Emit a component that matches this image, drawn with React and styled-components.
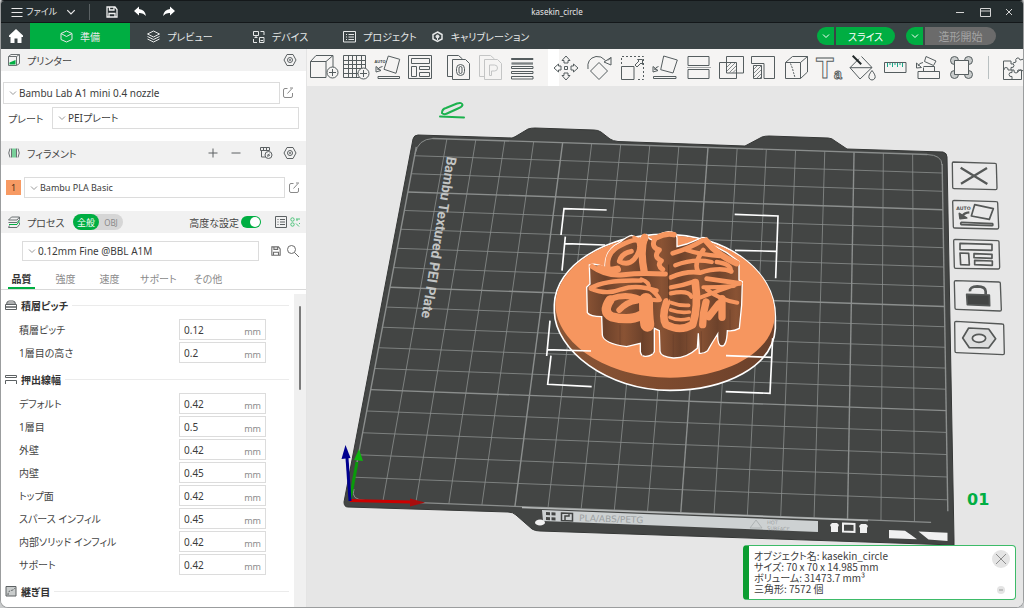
import React, { useId, useState } from "react";
import styled, { createGlobalStyle } from "styled-components";

const GlobalStyle = createGlobalStyle`
  * {
    box-sizing: border-box;
  }
  body {
    margin: 0;
    background-color: #c9cbcc;
  }
  body, button, input, select {
    font-family: "Noto Sans", "Noto Sans CJK JP", sans-serif;
    font-size: 10px;
    font-feature-settings: "palt";
    white-space: nowrap;
  }
  button {
    padding: 0;
    border: 0;
    background: none;
    color: inherit;
    display: flex;
    align-items: center;
    justify-content: center;
  }
`;

const green = "#00ae42";

const Window = styled.div`
  display: flex;
  flex-direction: column;
  height: 100vh;
  overflow: hidden;
  border: 1px solid #9b9d9e;
  border-top-color: #14181a;
  border-radius: 4px 4px 8px 8px;
  background-color: #fff;
  color: #444;
`;

/* title bar */

const TitleBar = styled.header`
  display: flex;
  align-items: center;
  flex: 0 0 22px;
  background-color: #262e30;
  border-bottom: 1px solid #14181a;
  color: #e8e8e8;
`;

const TitleGroup = styled.div`
  display: flex;
  align-items: center;
  width: ${(props) => props.$width}px;
  padding-left: ${(props) => props.$pad || 0}px;
`;

const TitleButton = styled.button`
  width: ${(props) => props.$width}px;
  height: 21px;
  gap: 3px;
  font-size: 9px;
`;

const FileButton = styled(TitleButton)`
  justify-content: flex-start;
  padding-left: 2px;
`;

const TitleDivider = styled.span`
  width: 1px;
  height: 16px;
  margin: 0 10px 0 6px;
  background-color: #5a6163;
`;

const Title = styled.h1`
  flex: 1;
  margin: 0;
  text-align: center;
  font-size: 8px;
  font-weight: 400;
`;

/* menu bar */

const MenuBar = styled.nav`
  display: flex;
  align-items: stretch;
  flex: 0 0 26px;
  background-color: #3b4446;
  color: #e6e8e8;
`;

const HomeButton = styled.button`
  width: 29px;
`;

const MenuTab = styled.button`
  width: 100px;
  gap: 7px;
  background-color: ${(props) => (props.$active ? green : "transparent")};
`;

const MenuActions = styled.div`
  display: flex;
  align-items: center;
  gap: 11px;
  margin-left: auto;
  padding-right: 27px;
`;

const SplitButton = styled.div`
  display: flex;
  gap: 2px;
  height: 18px;
`;

const SplitArrow = styled.button`
  width: 17px;
  border-radius: 9px 0 0 9px;
  background-color: ${green};
`;

const SplitMain = styled.button`
  width: ${(props) => props.$width}px;
  border-radius: 0 9px 9px 0;
  background-color: ${(props) => (props.disabled ? "#6b6b6b" : green)};
  color: ${(props) => (props.disabled ? "#a3a3a3" : "#fff")};
  font-size: ${(props) => (props.disabled ? 11 : 10)}px;
`;

/* sidebar */

const Main = styled.main`
  display: flex;
  flex: 1;
  min-height: 0;
`;

const Sidebar = styled.aside`
  display: flex;
  flex-direction: column;
  flex: 0 0 306px;
  min-height: 0;
  background-color: #fff;
  border-right: 1px solid #e4e4e4;
`;

const PanelHeader = styled.div`
  display: flex;
  align-items: center;
  flex: 0 0 ${(props) => props.$height}px;
  margin-top: ${(props) => props.$top || 0}px;
  padding: 0 ${(props) => props.$right || 9}px 0 6px;
  background-color: #f1f1f1;
`;

const PanelTitle = styled.h2`
  flex: ${(props) => (props.$width ? `0 0 ${props.$width}px` : "1")};
  margin: 0 0 0 6px;
  font-size: 10px;
  font-weight: 400;
`;

const HeaderButton = styled.button`
  width: 14px;
  height: 14px;
  margin-left: ${(props) => props.$gap || 0}px;
`;

const Row = styled.div`
  display: flex;
  align-items: center;
  flex: none;
  margin-top: ${(props) => props.$top}px;
  padding: 0 ${(props) => props.$right}px 0 ${(props) => props.$left}px;
`;

const RowLabel = styled.label`
  width: 44px;
`;

const SelectBox = styled.div`
  display: flex;
  align-items: center;
  flex: 1;
  height: ${(props) => props.$height || 22}px;
  padding-left: 5px;
  border: 1px solid #dcdcdc;
  background-color: #fff;
`;

const PlainSelect = styled.select`
  flex: 1;
  min-width: 0;
  padding: 0;
  margin-left: 2px;
  border: 0;
  outline: 0;
  appearance: none;
  background: none;
  color: #3c3c3c;
  font-size: ${(props) => (props.$small ? 9 : 10)}px;
`;

const RowButton = styled.button`
  width: 14px;
  height: 14px;
  margin-left: ${(props) => props.$gap}px;
`;

const Swatch = styled.button`
  width: 15px;
  height: 15px;
  margin-right: 3px;
  background-color: #f79a63;
  color: #4f2c15;
  font-size: 9px;
`;

const Segment = styled.div`
  display: flex;
  height: 16px;
  margin-right: auto;
  border-radius: 8px;
  background-color: #d6d6d6;
`;

const SegmentButton = styled.button`
  width: ${(props) => (props.$active ? 26 : 24)}px;
  border-radius: 8px;
  background-color: ${(props) => (props.$active ? green : "transparent")};
  color: ${(props) => (props.$active ? "#fff" : "#8a8a8a")};
  font-size: ${(props) => (props.$active ? 9 : 8)}px;
`;

const Toggle = styled.input`
  flex: none;
  appearance: none;
  width: 20px;
  height: 12px;
  margin: 0 0 0 2px;
  padding: 1px;
  border-radius: 6px;
  background-color: #bbb;

  &::before {
    content: "";
    display: block;
    width: 10px;
    height: 10px;
    border-radius: 50%;
    background-color: #fff;
  }
  &:checked {
    background-color: ${green};
  }
  &:checked::before {
    margin-left: auto;
  }
`;

const TabList = styled.div`
  display: flex;
  flex: none;
  height: 21px;
  margin-top: 8px;
  padding-left: 7px;
  gap: 17px;
  border-bottom: 1px solid #d9d9d9;
`;

const Tab = styled.button`
  min-width: 27px;
  border-bottom: 2px solid ${(props) => (props.$active ? green : "transparent")};
  color: ${(props) => (props.$active ? "#333" : "#8a8a8a")};
  font-weight: ${(props) => (props.$active ? 700 : 400)};
`;

const Settings = styled.div`
  display: flex;
  flex: 1;
  min-height: 0;
`;

const SettingsList = styled.div`
  flex: 1;
  overflow: hidden;
`;

const ScrollTrack = styled.div`
  flex: 0 0 11px;
  margin-top: 4px;
  padding: 12px 5px;
  background-color: #f0f0f0;
`;

const ScrollThumb = styled.div`
  width: 2px;
  height: 84px;
  border-radius: 1px;
  background-color: #7b7b7b;
`;

const GroupTitle = styled.h3`
  display: flex;
  align-items: center;
  gap: 4px;
  height: 20px;
  margin: 5px 5px 3px 4px;
  color: #333;
  font-size: 10px;
  font-weight: 700;

  &::after {
    content: "";
    flex: 1;
    height: 1px;
    background-color: #ebebeb;
  }
`;

const Setting = styled.div`
  display: flex;
  align-items: center;
  justify-content: space-between;
  height: 23px;
  padding: 0 28px 0 18px;
`;

const UnitBox = styled.div`
  display: flex;
  align-items: center;
  width: 87px;
  height: 21px;
  padding: 0 4px;
  border: 1px solid #dcdcdc;
  background-color: #fff;
`;

const UnitInput = styled.input`
  flex: 1;
  min-width: 0;
  padding: 0;
  border: 0;
  outline: 0;
  color: #3c3c3c;
  font-size: 10px;
`;

const Unit = styled.span`
  padding-top: 3px;
  color: #8c8c8c;
  font-size: 9px;
`;

/* 3d viewport */

const Viewport = styled.section`
  position: relative;
  display: flex;
  flex-direction: column;
  flex: 1;
  min-width: 0;
  background-color: #e6e6e6;
`;

const Toolbar = styled.div`
  display: flex;
  align-items: center;
  flex: 0 0 37px;
  overflow: hidden;
  background-color: #f5f4f3;
`;

const ToolGroup = styled.div`
  display: flex;
  flex: ${(props) => props.$flex || "none"};
  padding: 0 ${(props) => props.$right || 0}px 0 ${(props) => props.$left || 0}px;
`;

const Tool = styled.button`
  flex: ${(props) => (props.$grow ? "1 1 0" : `0 0 ${props.$width || 32}px`)};
  justify-content: ${(props) => (props.$width ? "flex-start" : "center")};
  min-width: 0;
  height: 28px;
  opacity: ${(props) => (props.disabled ? 0.3 : 1)};

  svg {
    flex: none;
  }
`;

const ToolGap = styled.div`
  width: 11px;
  align-self: stretch;
  margin-right: -9px;
  background-color: #fff;
`;

const ToolDivider = styled.div`
  width: 1px;
  height: 23px;
  background-color: #b9c0c1;
`;

const Scene = styled.svg`
  display: block;
  flex: 1;
  width: 100%;
  min-height: 0;
`;

const Notice = styled.div`
  position: absolute;
  right: 7px;
  bottom: 7px;
  display: flex;
  width: 273px;
  height: 55px;
  padding: 4px 5px 5px 5px;
  border: 1px solid #3dbb68;
  border-left: 6px solid #0b9d31;
  border-radius: 4px;
  background-color: #fff;
  color: #3c3c3c;
`;

const NoticeText = styled.p`
  flex: 1;
  margin: 0;
  font-family: "Noto Sans CJK JP", sans-serif;
  font-size: 10px;
  line-height: 11px;
`;

const NoticeButtons = styled.div`
  display: flex;
  flex-direction: column;
  align-items: center;
  justify-content: space-between;
`;

const RoundButton = styled.button`
  width: ${(props) => props.$size}px;
  height: ${(props) => props.$size}px;
  border-radius: 50%;
  background-color: #e4e4e4;
`;

/* icons */

const Icon = ({ size = 14, w, h, vw, vh, color = "#5c6163", stroke = 1, children }) => (
  <svg
    width={w || size}
    height={h || size}
    viewBox={`0 0 ${vw || w || size} ${vh || h || size}`}
    fill="none"
    stroke={color}
    strokeWidth={stroke}
    aria-hidden="true"
  >
    {children}
  </svg>
);

const Chevron = ({ color = "#9a9a9a", size = 8 }) => (
  <Icon size={size} vw={8} vh={8} color={color}>
    <path d="M1 2.500 4 5.500 7 2.500" />
  </Icon>
);

const GearNut = () => (
  <Icon>
    <path d="M4 1.500h6L13 7l-3 5.500H4L1 7z" strokeLinejoin="round" />
    <circle cx="7" cy="7" r="2.500" />
    <circle cx="7" cy="7" r="0.600" />
  </Icon>
);

const EditIcon = () => (
  <Icon color="#8a8a8a">
    <path d="M6.500 2.500H4a1.500 1.500 0 0 0-1.500 1.500v6A1.500 1.500 0 0 0 4 11.500h6a1.500 1.500 0 0 0 1.500-1.500V7M6.500 7.500 11 2.500M9 2h3" />
  </Icon>
);

const SaveIcon = ({ color = "#6b6b6b", size = 12 }) => (
  <Icon size={size} vw={12} vh={12} color={color} stroke={1.3}>
    <path d="M1 1h8l2 2.500V11H1zM3.500 1v3H8V1M3 11V7.500h6V11" />
  </Icon>
);

const PrinterIcon = () => (
  <Icon color="#6a7072">
    <path d="M1.500 3.500h8v9h-8zM1.500 3.500 4 1.500h8.500v9l-3 2M9.500 3.500l3-2" />
    <path d="M2.500 11.500V9.500L8.500 7v4.500z" fill={green} stroke="none" />
  </Icon>
);

const FilamentIcon = () => (
  <Icon color="#6a7072">
    <path d="M3 2.500Q.5 7 3 11.500M11 2.500Q13.500 7 11 11.500" />
    <path d="M4.500 2.500v9M9.500 2.500v9" />
    <path d="M6 2.500v9M8 2.500v9" stroke={green} />
  </Icon>
);

const ProcessIcon = () => (
  <Icon color="#6a7072">
    <path d="M4.500 2h8l-2.500 3H1.500zM12.500 2v2.500L10 7.500H1.500" />
    <path d="M12.500 7.500v2L10 12.500H1.500l1-2" />
    <path d="M12.500 5.500 10 9.500H2" stroke={green} />
  </Icon>
);

/* icons of the viewport toolbar, all on a 32 x 28 canvas */

const ToolIcon = ({ children }) => (
  <Icon w={32} h={28} color="#555d5f">
    {children}
  </Icon>
);

const PlusBadge = ({ x, y }) => (
  <>
    <circle cx={x} cy={y} r="5.500" fill="#f5f4f3" />
    <path d={`M${x - 3.5} ${y}h7M${x} ${y - 3.5}v7`} />
  </>
);

const toolIcons = {
  addCube: (
    <ToolIcon>
      <path d="M2.500 7.500H18v16H2.500zM2.500 7.500 8 1.500h17l-7 6M25 1.500v13" />
      <PlusBadge x={24.5} y={18.5} />
    </ToolIcon>
  ),
  addPlate: (
    <ToolIcon>
      <path d="M3.500 1.500h22v22h-22zM8.500 1.500v22M12.500 1.500v22M16.500 1.500v22M21.500 1.500v22M3.500 6.500h22M3.500 10.500h22M3.500 14.500h22M3.500 19.500h22" />
      <PlusBadge x={23.5} y={19.5} />
    </ToolIcon>
  ),
  auto: (
    <ToolIcon>
      <path d="M16.300 2 27.700 5.300 24 19.300 12 15.300zM6 22.500h21.500v2H6z" />
      <path d="M10.500 12.500Q6.500 13 5.500 16M4 12.500v5.500l5-1.500zM5.500 14.500l3 2" />
      <text x="2.500" y="9" fontSize="4" fontWeight="700" fill="#434b4d" stroke="none">AUTO</text>
    </ToolIcon>
  ),
  arrange: (
    <ToolIcon>
      <path d="M4.500 1.500h23v23h-23zM7.500 4.500h18v5h-18zM7.500 12.500h5v10h-5zM15.500 12.500h10v3h-10zM15.500 18.500h10v4h-10z" />
    </ToolIcon>
  ),
  pageO: (
    <ToolIcon>
      <path d="M10 22.500H5.500v-21h11l4 3.500M10.500 5.500h13l4 4v16h-17z" />
      <rect x="14.500" y="10.500" width="8" height="11" rx="4" />
      <rect x="17" y="12.500" width="3" height="7" rx="1.500" />
    </ToolIcon>
  ),
  pageP: (
    <ToolIcon>
      <path d="M10 22.500H5.500v-21h11l4 3.500M10.500 5.500h13l4 4v16h-17z" />
      <path d="M15.500 21.500v-10.500h5q3 0 3 3t-3 3h-3v4.500z" />
    </ToolIcon>
  ),
  layers: (
    <ToolIcon>
      <path d="M5.500 5H27M5.500 9H27M5.500 10H27" />
      <path d="M5.500 4.500H27v1H5.500zM5.500 12.500H27v2H5.500zM5.500 17.500H27v2H5.500zM5.500 22.500H27v2.500H5.500z" />
    </ToolIcon>
  ),
  move: (
    <ToolIcon>
      <path d="m16 2 4 4.500h-2V9h-4V6.500h-2zM16 26l4-4.500h-2V19h-4v2.500h-2zM4 14l4.500-4v2H11v4H8.500v2zM28 14l-4.500-4v2H21v4h2.500v2z" />
      <path d="M14.500 12.500h3v3h-3z" />
    </ToolIcon>
  ),
  rotate: (
    <ToolIcon>
      <path d="m16 8.500 8.500 8.500-8.500 8.500L7.500 17z" />
      <path d="M5 15Q3.500 4.500 13 2.500q5-1 9.500 4M28 3.500v7.500l-7-3zM28 3.500l-3 3" />
    </ToolIcon>
  ),
  scale: (
    <ToolIcon>
      <path d="M5.500 12.500H18v13H5.500z" />
      <path d="M5.500 10V2.500h22v23H20" strokeDasharray="2 2" />
      <path d="m19 11 4-4-1.500-1.500h5v5L25 9l-4 4z" />
    </ToolIcon>
  ),
  lay: (
    <ToolIcon>
      <path d="M14.700 2 28.300 6 24 19 11.700 15.700zM4.500 22.500h22.500v2H4.500z" />
      <path d="M9.500 12.500Q6.500 13 5.500 16M4 12.500v5.500l5-1.500zM5.500 14.500l3 2" />
    </ToolIcon>
  ),
  cut: (
    <ToolIcon>
      <path d="M6 2.500h21v9H6zM6 15.500h21v9H6z" />
      <path d="M5.500 13.500h23" strokeDasharray="1 1" />
    </ToolIcon>
  ),
  boolean: (
    <ToolIcon>
      <path d="M4.500 8.500h17v16h-17zM11.500 2.500h17v16.500h-17z" />
      <path d="m12 13 4.500-4.500M12 17l8.500-8.500M14.500 18.500l7-7M18 18.500l3-3" strokeWidth="0.700" />
    </ToolIcon>
  ),
  support: (
    <ToolIcon>
      <path d="M4.500 2.500h23v22H17v-15H4.500zM6.500 11.500h8v13h-8z" />
      <path d="m6.500 15.500 4-4M6.500 19.500l8-8M6.500 23.500l8-8M9.500 24.500l5-5M12.500 24.500l2-2" strokeWidth="0.700" />
    </ToolIcon>
  ),
  seam: (
    <ToolIcon>
      <path d="M5.500 8.500h15v16h-15zM5.500 8.500l7-6h15l-7 6M27.500 2.500v15.500l-7 6.500" />
      <path d="m10.500 9.500 2 5 1 4 1.500 5" strokeDasharray="2 1" />
    </ToolIcon>
  ),
  text: (
    <ToolIcon>
      <text x="3" y="24" fontSize="29" fontFamily="Liberation Sans" fontWeight="700" strokeWidth="0.900">T</text>
      <text x="21" y="25" fontSize="14" fontFamily="Liberation Sans" fontWeight="700" strokeWidth="0.900">a</text>
    </ToolIcon>
  ),
  paint: (
    <ToolIcon>
      <path d="m15.500 2.500 10.500 11-12 11.500L4 13.700l9-9M4 13.700h22" />
      <path d="m6.700 1.700 8.500 8.500" strokeWidth="2" stroke="#222829" />
      <path d="M26 16.500q4 5 3 7.500-1 2-3 2t-3-2q-1-2.500 3-7.500z" fill="#f5f4f3" />
    </ToolIcon>
  ),
  measure: (
    <ToolIcon>
      <path d="M5.500 8.500H27v10H5.500z" />
      <path d="M8.500 9v4M11 9v2M13.500 9v4M16 9v2M18.500 9v4M21 9v2M23.500 9v4" stroke="#1aa88a" />
    </ToolIcon>
  ),
  assembly: (
    <ToolIcon>
      <path d="M6 17.500h21.500v7H6zM11.500 13.500V17M22.500 12.500V17M11.500 12.500h11" />
      <path d="m14 2.500 10 4.500-2.500 4.500-9-4zM11 8.500Q7 9 6 12M4.500 9v5l5-.5z" />
    </ToolIcon>
  ),
  frame: (
    <ToolIcon>
      <path d="M9.500 6.500h14v14h-14z" />
      <g fill="#c9cccc">
        <path d="M9.500 10.500a4 4 0 1 1 4-4h-4zM23.500 10.500a4 4 0 1 0-4-4h4zM9.500 16.500a4 4 0 1 0 4 4h-4zM23.500 16.500a4 4 0 1 1-4 4h4z" />
      </g>
    </ToolIcon>
  ),
  puzzle: (
    <ToolIcon>
      <path d="M7.500 7h7.500v3q3-1 3 1.500T15 13.500V16h-3q.5-2.500-2-2.500T8 16h-.5zM7.500 16v9.500H16v-3q-3 .5-3-2t3-2V16h-1M16 25.500h9.500V16H22q.5 3-2 3t-2-3h-2" />
      <path d="m17 9 3-1q-1-3 1-4t3 2l4-1 1 4q3-1 3.500 1.500T29 13l-1 4-4-1q-1 2-3 1" />
    </ToolIcon>
  ),
};

/* scene */

const plateCorners = { tl: [418, 138], tr: [942, 155], br: [948, 523], bl: [350, 500] };

// perspective mapping of the unit square onto the plate
const makeProjection = ({ tl, tr, br, bl }) => {
  const dx1 = tr[0] - br[0];
  const dx2 = bl[0] - br[0];
  const dx3 = tl[0] - tr[0] + br[0] - bl[0];
  const dy1 = tr[1] - br[1];
  const dy2 = bl[1] - br[1];
  const dy3 = tl[1] - tr[1] + br[1] - bl[1];
  const det = dx1 * dy2 - dx2 * dy1;
  const g = (dx3 * dy2 - dx2 * dy3) / det;
  const h = (dx1 * dy3 - dx3 * dy1) / det;
  return (u, v) => {
    const w = g * u + h * v + 1;
    const x = (tr[0] - tl[0] + g * tr[0]) * u + (bl[0] - tl[0] + h * bl[0]) * v + tl[0];
    const y = (tr[1] - tl[1] + g * tr[1]) * u + (bl[1] - tl[1] + h * bl[1]) * v + tl[1];
    return [x / w, y / w];
  };
};

const project = makeProjection(plateCorners);
const CELLS = 18;

const gridLines = [];
for (let i = 0; i <= CELLS; i++) {
  const t = i / CELLS;
  const edge = i === 0 || i === CELLS;
  const near = edge ? 0.028 : 0;
  gridLines.push({ from: project(t, near), to: project(t, 1 - near), bold: i % 5 === 0 || edge });
  gridLines.push({ from: project(near, t), to: project(1 - near, t), bold: (CELLS - i) % 5 === 0 || edge });
}

const PlateGrid = () => (
  <g stroke="#8b8e8d" fill="none">
    {gridLines.map(({ from, to, bold }, i) => (
      <line
        key={i}
        x1={from[0]}
        y1={from[1]}
        x2={to[0]}
        y2={to[1]}
        strokeWidth={bold ? 1.4 : 1}
        opacity={bold ? 1 : 0.8}
      />
    ))}
    <path d="M415 154Q418 139 433 138.500M927 154.500Q942 155 942 165M354 489Q350 500 366 500.600" />
  </g>
);

const Plate = () => (
  <g>
    <path
      d="M418 135 512 138Q515 137 518 135L528 129Q531 128 535 128L594 130Q598 130 601 132L610 139Q613 141 618 141.500L745 146 762 137Q765 136 769 136L828 138Q832 138 835 141L847 149 943 152Q947 153 947 157L954 540V545L540 531Q535 531 532 529L516 515Q513 512 508 512L348 507Q344 507 344 502L413 139Q414 135 418 135z"
      fill="#434544"
      stroke="#363837"
    />
    <PlateGrid />
    <text
      transform="translate(447 156) rotate(99)"
      fill="#c2c4c3"
      fontFamily="Roboto"
      fontSize="14"
      fontWeight="700"
    >
      Bambu Textured PEI Plate
    </text>
    <path d="M522 507.500 868 520.500" stroke="#b6b9b9" strokeWidth="1.500" />
    <path d="M542 510 818 521V532L543 521z" fill="#cdd1d2" />
    <ellipse cx="540" cy="522.500" rx="5" ry="3" fill="#f2f2f2" />
    <path d="m546 512 4 .2v3l-4-.2zM551.500 512.200l4 .2v3l-4-.2zM546 517l4 .2v3l-4-.2zM551.500 517.200l4 .2v3l-4-.2z" fill="#434544" />
    <path d="m561.500 513 11 .4v7.500l-11-.4zM565 520v-4h4v-2.500" stroke="#434544" fill="none" strokeWidth="1.500" />
    <g fill="#9da2a3" fontFamily="DejaVu Sans">
      <text transform="translate(579 521) rotate(2)" fontSize="9">PLA/ABS/PETG</text>
      <text transform="translate(767 524) rotate(2)" fontSize="5">HOT</text>
      <text transform="translate(767 530) rotate(2)" fontSize="5">SURFACE</text>
    </g>
    <path d="m756 520 6 8h-12z" fill="none" stroke="#aeb3b4" />
    <g fill="#f0f0f0">
      <path d="M889 530l16 .7q6 4 12 8.600l-28-1zM918.500 531.500l29 1.200V541l-19-1.500q-5-4-10-8z" />
      <path d="M830 525l2-2h5l2 2-1 2v5h-7v-5zM859 526l2-2h5l2 2-1 2v5h-7v-5z" />
    </g>
    <path d="M843 523.500l11.500.4v8l-11.500-.4z" fill="none" stroke="#f0f0f0" strokeWidth="2" />
  </g>
);

const letterShape =
  "M148 195Q170 188 195 203Q192 150 240 127Q262 108 275 106L300 116 318 103 328 116 340 122Q350 100 385 95Q411 95 411 115V140L440 132 488 112 500 114 512 132 560 158 597 185V240L607 245 605 315 598 385Q580 395 562 392Q560 440 545 438Q532 436 533 402Q515 430 503 452Q490 462 478 460L475 400 472 445Q440 475 400 474Q362 470 360 455L358 392 343 385V455Q335 470 315 469Q303 468 301 455V430L260 440Q190 430 187 405L185 350Q150 350 142 338L140 262 150 252z";

const Model = () => (
  <g transform="translate(540 200) scale(.33333)">
    <defs>
      <linearGradient id="rim" x1="0" x2="1">
        <stop offset="0" stopColor="#8a5636" />
        <stop offset="0.500" stopColor="#7d4a2e" />
        <stop offset="1" stopColor="#6a402b" />
      </linearGradient>
      <linearGradient id="wall" x1="0" x2="0.120" spreadMethod="reflect">
        <stop offset="0" stopColor="#8a5334" />
        <stop offset="1" stopColor="#6d422b" />
      </linearGradient>
    </defs>
    <path
      d="M43 315C46 195 200 103 375 103S706 205 706 350V385C700 500 555 571 390 571C200 571 46 450 43 335z"
      fill="url(#rim)"
      stroke="#fff"
      strokeWidth="5"
    />
    <path d="M46 315C50 195 200 106 375 106S704 205 704 345C704 455 560 533 390 533C200 533 50 430 46 315z" fill="#f6965f" />
    <path d={letterShape} fill="url(#wall)" stroke="#fff" strokeWidth="4" />
    <g fill="none" stroke="#f6965f" strokeLinecap="round" strokeLinejoin="round">
      {/* upper left */}
      <path d="M156 199Q200 230 250 224T376 222" strokeWidth="15" />
      <path d="M180 206Q204 216 232 208" strokeWidth="22" />
      <path d="M204 200Q198 158 242 136T296 124Q306 150 282 178Q264 198 238 184Q244 160 274 154" strokeWidth="15" />
      <path d="M314 112Q300 150 312 212" strokeWidth="22" />
      <path d="M282 112Q300 125 320 118" strokeWidth="10" />
      <path d="M348 114Q376 98 402 104" strokeWidth="16" />
      <path d="M344 118Q332 142 358 150Q338 170 364 182Q350 196 368 208" strokeWidth="15" />
      {/* upper right */}
      <path d="M488 121Q450 145 398 160" strokeWidth="14" />
      <path d="M498 122Q530 164 590 190" strokeWidth="19" />
      <path d="M440 150Q480 164 540 168M406 196Q460 174 515 186" strokeWidth="13" />
      <path d="M490 150Q460 190 474 214M392 232Q440 212 480 218Q540 200 574 214M500 236 600 250" strokeWidth="14" />
      <path d="M530 186Q576 192 572 214" strokeWidth="13" />
      {/* lower left */}
      <path d="M152 266Q200 286 244 268Q290 252 350 272M152 264Q200 238 304 242" strokeWidth="13" />
      <path d="M304 238Q330 246 326 264Q352 282 360 300Q334 304 312 290" strokeWidth="12" />
      <path d="M210 300Q186 336 214 350Q270 364 302 346" strokeWidth="28" />
      <path d="M214 296Q270 276 318 308M238 330Q262 304 290 302" strokeWidth="18" />
      <path d="M318 300Q318 350 322 374" strokeWidth="42" />
      {/* lower right */}
      <path d="M392 262Q430 256 464 244M392 280Q446 270 454 290" strokeWidth="13" />
      <path d="M380 306Q364 352 378 374Q420 396 458 374Q476 318 466 248" strokeWidth="23" />
      <path d="M394 308Q420 318 446 316M392 330Q420 340 448 336M390 352Q416 364 446 356" strokeWidth="11" />
      <path d="M490 262Q540 262 582 258M482 292Q540 270 598 250M500 268Q540 300 592 308" strokeWidth="12" />
      <path d="M498 306Q488 340 488 374M506 350 536 312M546 296V352" strokeWidth="22" />
    </g>
    <g fill="none" stroke="#6a402b" strokeWidth="3" strokeLinecap="round">
      <path d="M308 400V466M338 398V460M240 376V434M400 404V470M440 400V462M484 395V456M570 330V388" opacity=".6" />
      <path d="M386 195V300" strokeWidth="2" stroke="#4f3020" />
    </g>
    <g fill="none" stroke="#fff" strokeWidth="5">
      <path d="M200 30 72 26 63 105M76 110 66 212M76 131 195 135M584 43 714 48 707 235M585 151 708 154" />
      <path d="M30 362 20 468M20 449 153 453M33 467 23 553 155 560M558 467 695 472M698 415 690 580 557 575" />
    </g>
  </g>
);

const PlateButtons = () => (
  <g transform="translate(930 150) scale(.33333)" fill="none" stroke="#555857" strokeWidth="5" strokeLinejoin="round">
    <g fill="#e9e9e9" strokeWidth="4">
      <path d="M70 36 196 40Q199 40 199 44L201 114Q201 119 197 119L72 116Q68 116 68 112L67 40Q67 36 70 36z" />
      <path d="M72 151 199 155Q203 155 203 159L206 232Q206 237 202 237L74 234Q70 234 70 230L68 155Q68 151 72 151z" />
      <path d="M75 268 203 272Q207 272 207 276L209 352Q209 357 205 357L77 355Q73 355 73 351L71 272Q71 268 75 268z" />
      <path d="M77 392 207 396Q211 396 211 400L214 479Q214 483 210 483L79 478Q75 478 75 474L73 396Q73 392 77 392z" />
      <path d="M78 514 217 522Q221 522 221 526L223 610Q223 614 219 614L79 608Q75 608 75 604L74 518Q74 514 78 514z" />
    </g>
    <path d="M92 53 172 102M171 54 93 101" strokeWidth="7" />
    <path d="M134 164 190 176 178 208 124 198zM94 217 188 221Q190 227 186 227L94 224Q90 220 94 217z" />
    <path d="M118 187Q102 188 98 198" strokeWidth="7" />
    <path d="M88 190 90 206 110 204z" fill="#555857" />
    <text x="79" y="180" fontSize="14" fontWeight="700" fontFamily="DejaVu Sans" fill="#555857" stroke="none">AUTO</text>
    <path d="M90 280 186 283V301L90 299zM90 309 116 310 118 345 92 344zM132 311 186 313V325L132 323zM134 331 187 333V346L134 344z" />
    <path d="M110 433 178 435 179 467 112 464z" fill="#434544" />
    <path d="M120 424Q118 410 142 409 166 409 167 424V434" strokeWidth="8" />
    <path d="M116 534 176 537 197 566 176 594 118 593 98 564z" fill="#dcdddd" />
    <ellipse cx="147" cy="565" rx="20" ry="12" fill="#e9e9e9" />
  </g>
);

const Axes = () => (
  <g strokeWidth="3">
    <path d="M350 500 357 462" stroke="#0a9a0a" />
    <path d="m359 449 4 12-9-1z" fill="#0fb30f" />
    <path d="m350 500.500 60 1.500" stroke="#c00" />
    <path d="m425 502.500-15 4v-8z" fill="#a80d0d" />
    <path d="M350 501 347 458" stroke="#00008f" />
    <path d="m345.500 445 5 13-9 1z" fill="#00008f" />
  </g>
);

const PlateScene = () => (
  <Scene viewBox="307 86 716 521" preserveAspectRatio="xMidYMid slice" role="img" aria-label="kasekin_circle">
    <rect x="307" y="86" width="716" height="521" fill="#e6e6e6" />
    <Plate />
    <Model />
    <PlateButtons />
    <Axes />
    <g fill="none" stroke="#1cb24e" strokeWidth="2" strokeLinecap="round">
      <path d="M442 113Q442 109 446 108L457 103.500Q462 102 462.500 105 462 107 458 108.500L447 113.500Q444 115 442 113z" />
      <path d="m440 116.500 24 1" />
    </g>
    <text x="967" y="505" fill={green} fontFamily="DejaVu Sans" fontSize="16" fontWeight="700">01</text>
  </Scene>
);

/* page parts */

const menuTabs = [
  {
    label: "準備",
    icon: <path d="M6.500 1 12 3.500v6L6.500 12 1 9.500v-6zM1 3.500 6.500 6.500 12 3.500" />,
  },
  {
    label: "プレビュー",
    icon: <path d="M6.500 1 12.500 4l-6 3-6-3zM.5 6.500l6 3 6-3M.5 9l6 3 6-3" />,
  },
  {
    label: "デバイス",
    icon: <path d="M1.500 1.500h5v4h-5zM4 5.500V7M2.500 7.500h3M8.500 1.500H12V5M1.500 9v3.500H5M7.500 7.500H12v5H7.500zM8.500 10.500h2.500" />,
  },
  {
    label: "プロジェクト",
    icon: <path d="M.5 1.500h12v10.500H.5zM3 4.500h1M5.500 4.500H11M3 7h1M5.500 7H11M3 9.500h1M5.500 9.500H11" />,
  },
  {
    label: "キャリブレーション",
    icon: (
      <>
        <path d="M6.500 2 11 4.500v4.500l-4.500 2.500L2 9V4.500z" strokeWidth="1.500" />
        <circle cx="6.500" cy="6.500" r="1.500" fill="#e6e8e8" />
        <path d="M6.500 8v2" />
      </>
    ),
  },
];

const mainTools = [
  ["addCube", "追加"],
  ["addPlate", "プレートを追加"],
  ["auto", "自動回転"],
  ["arrange", "整列"],
];

const editTools = [
  "move", "rotate", "scale", "lay", "cut", "boolean", "support",
  "seam", "text", "paint", "measure", "assembly", "frame",
];

const groups = [
  {
    title: "積層ピッチ",
    icon: <path d="M1.500 5.500Q1.500 2 4 2h4q2.500 0 2.500 3.500zM.5 5.500h11V8H.5zM.5 8h11v2.500H.5zM2 4h8" />,
    items: [
      ["積層ピッチ", "0.12"],
      ["1層目の高さ", "0.2"],
    ],
  },
  {
    title: "押出線幅",
    icon: <path d="M.5 2.500h11v2H.5zM.5 11V7.500h11V11" />,
    items: [
      ["デフォルト", "0.42"],
      ["1層目", "0.5"],
      ["外壁", "0.42"],
      ["内壁", "0.45"],
      ["トップ面", "0.42"],
      ["スパース インフィル", "0.45"],
      ["内部ソリッド インフィル", "0.42"],
      ["サポート", "0.42"],
    ],
  },
  {
    title: "継ぎ目",
    icon: (
      <>
        <path d="M1 1.500h10v9.500H1z" fill="#c9cccc" />
        <path d="M3 10q0-4 3-4.500T10 3" strokeDasharray="2 1" />
      </>
    ),
    items: [],
  },
];

const NumberSetting = ({ label, value }) => {
  const id = useId();
  return (
    <Setting>
      <label htmlFor={id}>{label}</label>
      <UnitBox>
        <UnitInput id={id} defaultValue={value} />
        <Unit>mm</Unit>
      </UnitBox>
    </Setting>
  );
};

const Dropdown = ({ id, label, value, height, small }) => (
  <SelectBox $height={height}>
    <Chevron />
    <PlainSelect id={id} aria-label={label} $small={small}>
      <option>{value}</option>
    </PlainSelect>
  </SelectBox>
);

const SettingsSidebar = () => {
  const [tab, setTab] = useState("品質");

  return (
    <Sidebar>
      <PanelHeader $height={22}>
        <PrinterIcon />
        <PanelTitle>プリンター</PanelTitle>
        <HeaderButton aria-label="プリンター設定"><GearNut /></HeaderButton>
      </PanelHeader>
      <Row $top={11} $left={2} $right={11}>
        <Dropdown label="プリンター" value="Bambu Lab A1 mini 0.4 nozzle" />
        <RowButton $gap={1} aria-label="編集"><EditIcon /></RowButton>
      </Row>
      <Row $top={3} $left={7} $right={7}>
        <RowLabel htmlFor="plate">プレート</RowLabel>
        <Dropdown id="plate" value="PEIプレート" />
      </Row>

      <PanelHeader $height={24} $top={12}>
        <FilamentIcon />
        <PanelTitle>フィラメント</PanelTitle>
        <HeaderButton aria-label="追加">
          <Icon><path d="M2.500 7h9M7 2.500v9" /></Icon>
        </HeaderButton>
        <HeaderButton $gap={9} aria-label="削除">
          <Icon><path d="M2.500 7h9" /></Icon>
        </HeaderButton>
        <HeaderButton $gap={16} aria-label="同期">
          <Icon>
            <path d="M1.500 4.500v-3h9v3zM4.500 2v3M7.500 2v3M2.500 4.500v6.500h4" />
            <circle cx="9.500" cy="9" r="3.500" />
            <path d="M8 9.500l2.500-1.500M8.500 10.500l2.500-1.500" />
          </Icon>
        </HeaderButton>
        <HeaderButton $gap={10} aria-label="フィラメント設定"><GearNut /></HeaderButton>
      </PanelHeader>
      <Row $top={12} $left={5} $right={5}>
        <Swatch>1</Swatch>
        <Dropdown label="フィラメント" value="Bambu PLA Basic" height={21} small />
        <RowButton $gap={2} aria-label="編集"><EditIcon /></RowButton>
      </Row>

      <PanelHeader $height={22} $top={13} $right={4}>
        <ProcessIcon />
        <PanelTitle $width={46}>プロセス</PanelTitle>
        <Segment>
          <SegmentButton $active>全般</SegmentButton>
          <SegmentButton>OBJ</SegmentButton>
        </Segment>
        <label htmlFor="advanced">高度な設定</label>
        <Toggle id="advanced" type="checkbox" defaultChecked />
        <HeaderButton $gap={13} aria-label="一覧">
          <Icon><path d="M1.500 1.500h11v11h-11zM3.500 4.500h1M6 4.500h5M3.500 7h1M6 7h5M3.500 9.500h1M6 9.500h5" /></Icon>
        </HeaderButton>
        <HeaderButton aria-label="比較">
          <Icon size={12} color="#4cc37a">
            <circle cx="3.500" cy="3.500" r="1.700" />
            <circle cx="3.500" cy="8.500" r="1.700" />
            <path d="M7 3h4M7 7.500l3 3M10 7.500h1M8 3v2" />
          </Icon>
        </HeaderButton>
      </PanelHeader>
      <Row $top={8} $left={21} $right={6}>
        <Dropdown label="プロセス" value="0.12mm Fine @BBL A1M" height={20} />
        <RowButton $gap={10} aria-label="保存"><SaveIcon size={10} /></RowButton>
        <RowButton $gap={3} aria-label="検索">
          <Icon color="#6b6b6b"><circle cx="5.500" cy="5.500" r="4" /><path d="m8.500 8.500 4.500 4.500" /></Icon>
        </RowButton>
      </Row>

      <TabList role="tablist">
        {["品質", "強度", "速度", "サポート", "その他"].map((name) => (
          <Tab key={name} role="tab" $active={name === tab} onClick={() => setTab(name)}>
            {name}
          </Tab>
        ))}
      </TabList>
      <Settings>
        <SettingsList>
          {groups.map((group) => (
            <React.Fragment key={group.title}>
              <GroupTitle>
                <Icon size={12}>{group.icon}</Icon>
                {group.title}
              </GroupTitle>
              {group.items.map(([label, value]) => (
                <NumberSetting key={label} label={label} value={value} />
              ))}
            </React.Fragment>
          ))}
        </SettingsList>
        <ScrollTrack>
          <ScrollThumb />
        </ScrollTrack>
      </Settings>
    </Sidebar>
  );
};

const App = () => {
  return (
    <Window>
      <GlobalStyle />
      <TitleBar>
        <TitleGroup $width={182} $pad={8}>
          <FileButton $width={50}>
            <Icon size={12} color="#e8e8e8"><path d="M.5 2.500h11M.5 6.500h11M.5 10.500h11" /></Icon>
            ファイル
          </FileButton>
          <TitleButton $width={24} aria-label="メニュー"><Chevron color="#e8e8e8" size={10} /></TitleButton>
          <TitleDivider />
          <TitleButton $width={24} aria-label="保存"><SaveIcon color="#f0f0f0" /></TitleButton>
          <TitleButton $width={32} aria-label="元に戻す">
            <Icon size={14}><path d="M1 6 6 1.500V4q6 .5 7 7Q10 7.500 6 8v2.500z" fill="#fff" stroke="none" /></Icon>
          </TitleButton>
          <TitleButton $width={26} aria-label="やり直し">
            <Icon size={14}><path d="M13 6 8 1.500V4Q2 4.500 1 11 4 7.500 8 8v2.500z" fill="#fff" stroke="none" /></Icon>
          </TitleButton>
        </TitleGroup>
        <Title>kasekin_circle</Title>
        <TitleGroup $width={92} $pad={17}>
          <TitleButton $width={24} aria-label="最小化">
            <Icon size={12} color="#d5d5d5"><path d="M2 6.500h8" /></Icon>
          </TitleButton>
          <TitleButton $width={25} aria-label="最大化">
            <Icon size={12} color="#d5d5d5"><path d="M1.500 2.500h10v8h-10zM1.500 5h10" /></Icon>
          </TitleButton>
          <TitleButton $width={24} aria-label="閉じる">
            <Icon size={12} color="#d5d5d5"><path d="m3 3 6 6M9 3 3 9" /></Icon>
          </TitleButton>
        </TitleGroup>
      </TitleBar>

      <MenuBar>
        <HomeButton aria-label="ホーム">
          <Icon size={16}>
            <path d="M8 1 1 7.500V9h1.500v6h4v-4.500h3V15h4V9H15V7.500z" fill="#fff" stroke="none" />
          </Icon>
        </HomeButton>
        {menuTabs.map(({ label, icon }, i) => (
          <MenuTab key={label} $active={i === 0}>
            <Icon size={13} color="#e6e8e8">{icon}</Icon>
            {label}
          </MenuTab>
        ))}
        <MenuActions>
          <SplitButton>
            <SplitArrow aria-label="スライスの選択"><Chevron color="#fff" /></SplitArrow>
            <SplitMain $width={59}>スライス</SplitMain>
          </SplitButton>
          <SplitButton>
            <SplitArrow aria-label="造形の選択"><Chevron color="#fff" /></SplitArrow>
            <SplitMain $width={71} disabled>造形開始</SplitMain>
          </SplitButton>
        </MenuActions>
      </MenuBar>

      <Main>
        <SettingsSidebar />
        <Viewport>
          <Toolbar>
            <ToolGroup $left={1}>
              {mainTools.map(([name, label]) => (
                <Tool key={name} aria-label={label}>{toolIcons[name]}</Tool>
              ))}
            </ToolGroup>
            <ToolGroup $left={6} $right={10}>
              <Tool aria-label="オブジェクト">{toolIcons.pageO}</Tool>
              <Tool aria-label="パーツ" disabled>{toolIcons.pageP}</Tool>
              <Tool aria-label="可変積層">{toolIcons.layers}</Tool>
            </ToolGroup>
            <ToolGap />
            <ToolGroup $flex="1" $right={11}>
              {editTools.map((name) => (
                <Tool key={name} $grow aria-label={name}>{toolIcons[name]}</Tool>
              ))}
            </ToolGroup>
            <ToolDivider />
            <ToolGroup $left={7}>
              <Tool $width={27} aria-label="アセンブリ">{toolIcons.puzzle}</Tool>
            </ToolGroup>
          </Toolbar>
          <PlateScene />
          <Notice role="status">
            <NoticeText>
              オブジェクト名: kasekin_circle<br />
              サイズ: 70 x 70 x 14.985 mm<br />
              ボリューム: 31473.7 mm³<br />
              三角形: 7572 個
            </NoticeText>
            <NoticeButtons>
              <RoundButton $size={18} aria-label="閉じる">
                <Icon size={18} color="#8d8d8d"><path d="m4 4 10 10M14 4 4 14" /></Icon>
              </RoundButton>
              <RoundButton $size={8} aria-label="最小化">
                <Icon size={8} color="#9a9a9a"><path d="M2 4h4" /></Icon>
              </RoundButton>
            </NoticeButtons>
          </Notice>
        </Viewport>
      </Main>
    </Window>
  );
};

export default App;
